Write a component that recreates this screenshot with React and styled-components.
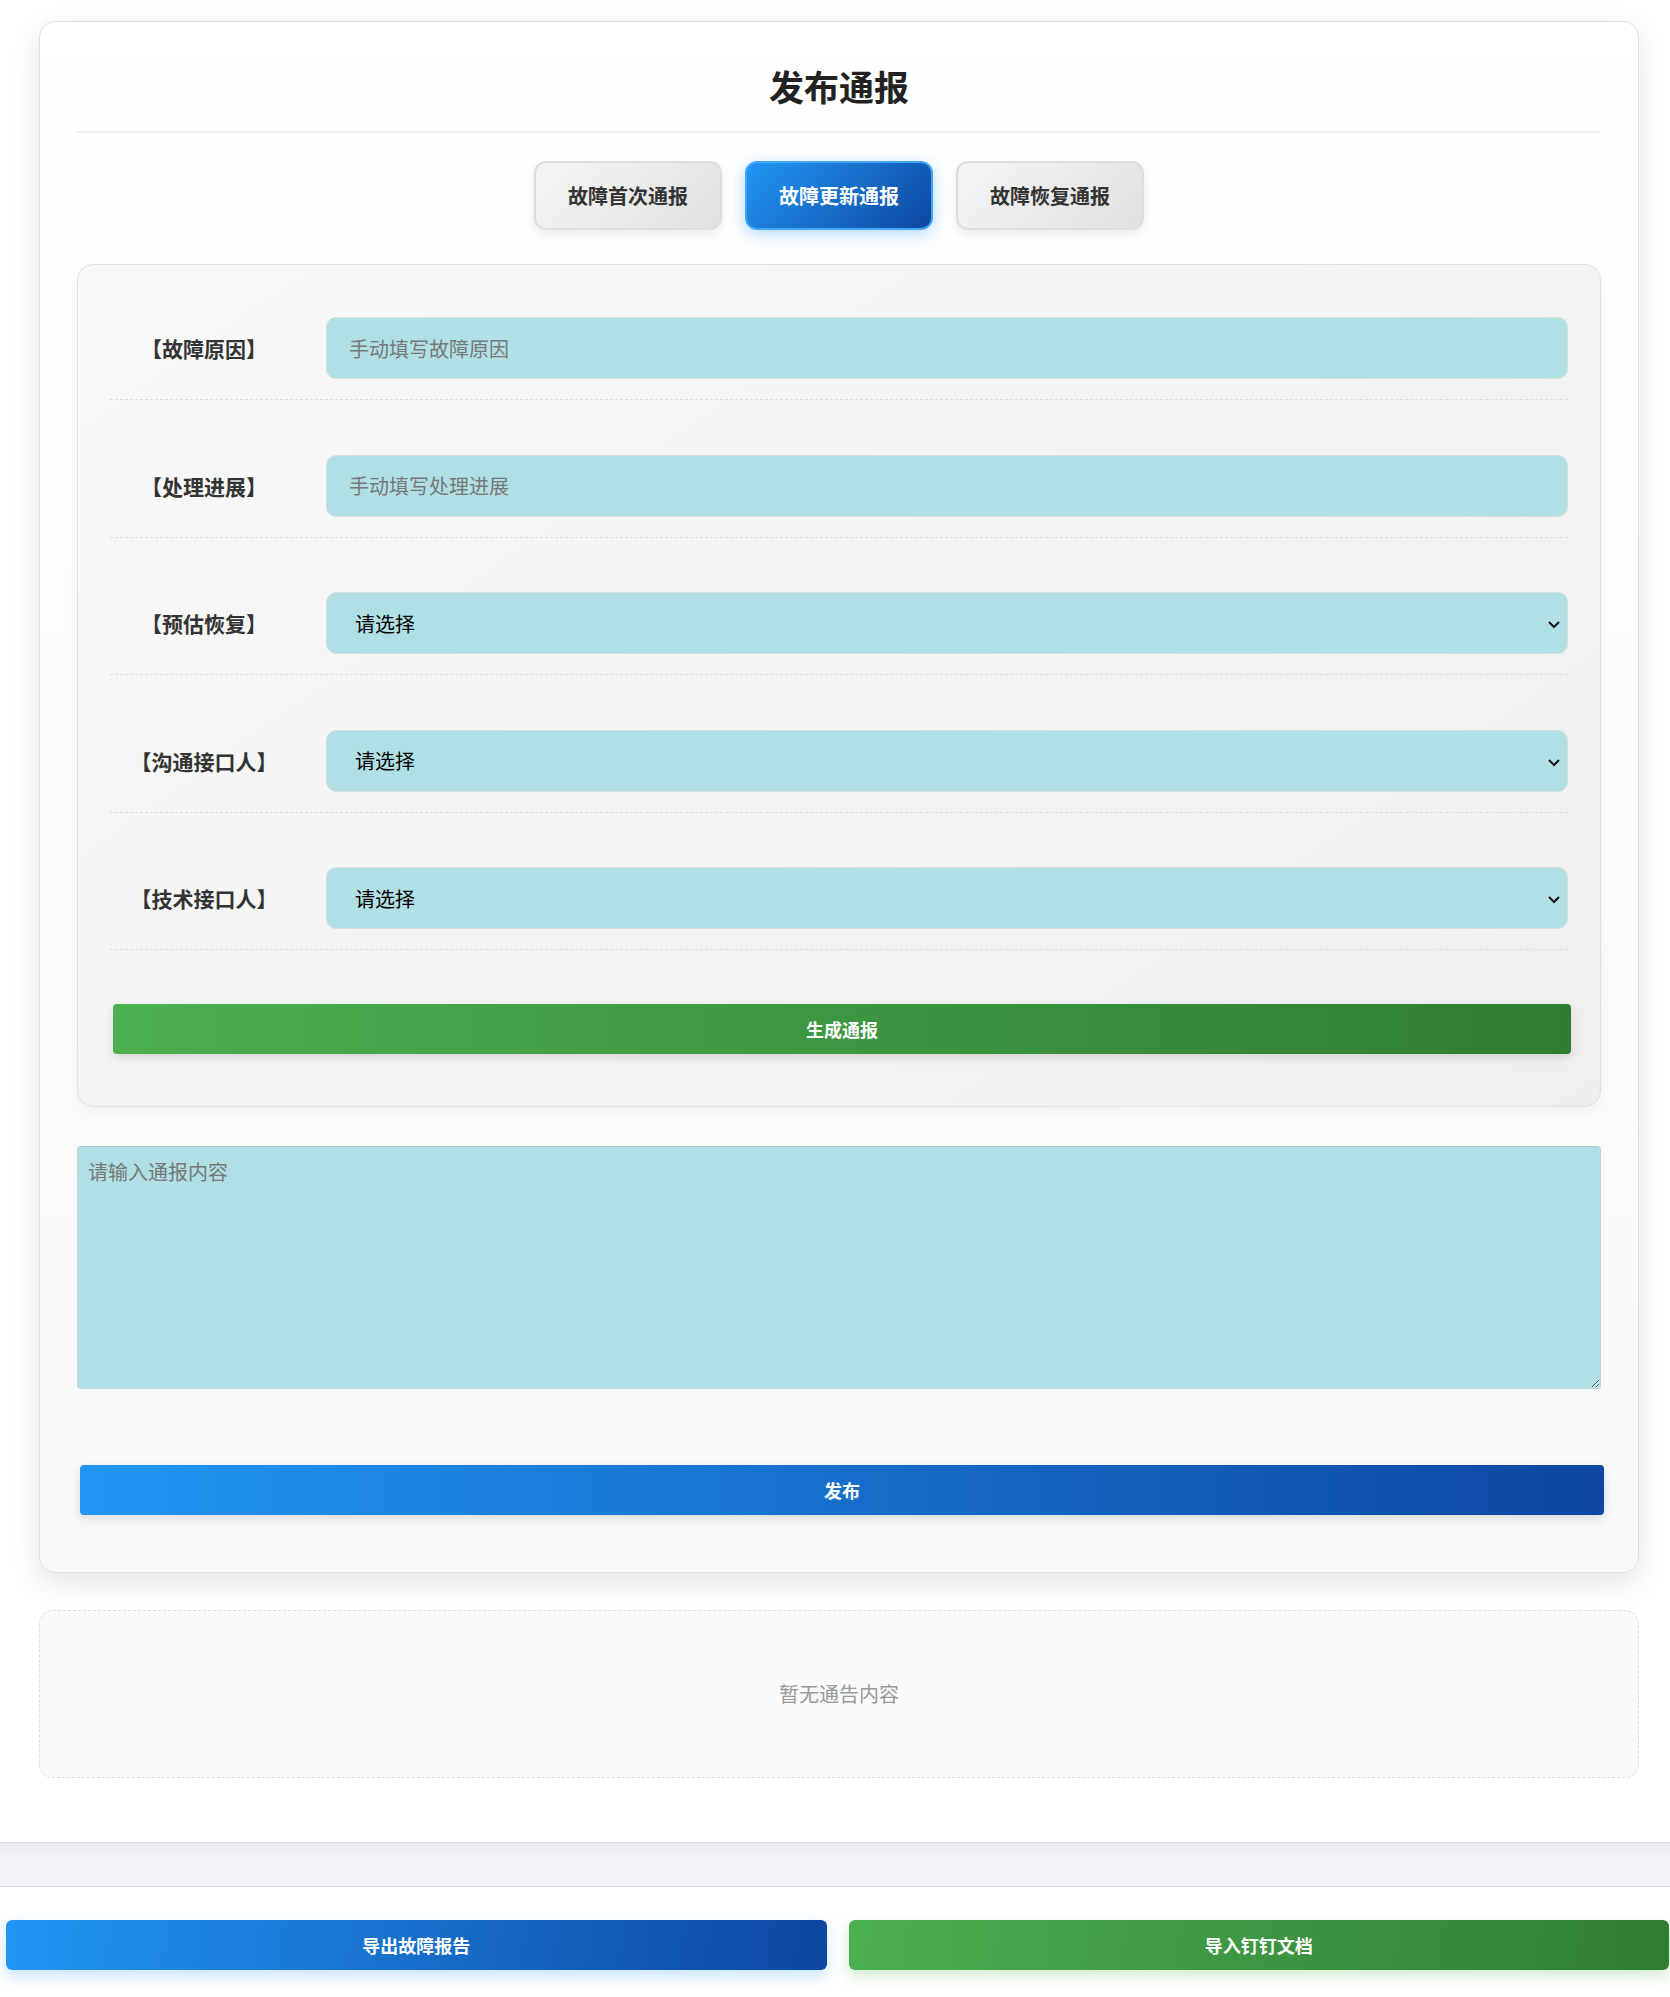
import React, { useState } from 'react';
import styled, { createGlobalStyle } from 'styled-components';

const GlobalStyle = createGlobalStyle`
  * {
    box-sizing: border-box;
  }

  body {
    margin: 0;
    background: #fff;
    font-family: "Noto Sans CJK SC", "Noto Sans", sans-serif;
    color: #333;
  }
`;

const Page = styled.div`
  padding: 21px 0 0 39px;
`;

const Card = styled.div`
  display: flex;
  flex-direction: column;
  width: 1600px;
  padding: 37px;
  background: linear-gradient(180deg, #ffffff 0%, #f8f9fa 100%);
  border: 1px solid #e0e0e0;
  border-radius: 16px;
  box-shadow: 0 10px 30px rgba(0, 0, 0, 0.1);
`;

const Title = styled.h2`
  margin: 6px 0 0;
  padding-bottom: 24px;
  border-bottom: 2px solid #eeeeee;
  text-align: center;
  font-size: 35px;
  line-height: 42px;
  font-weight: 700;
  color: #222;
`;

const Tabs = styled.div`
  display: flex;
  justify-content: center;
  gap: 23px;
  margin-top: 28px;
`;

const Tab = styled.button`
  padding: 20px 32px;
  font-family: inherit;
  font-size: 20px;
  line-height: 25px;
  font-weight: 700;
  border-radius: 12px;
  cursor: pointer;
  color: ${p => (p.$active ? '#fff' : '#333')};
  border: 2px solid ${p => (p.$active ? '#42a5f5' : '#dddddd')};
  background: ${p =>
    p.$active
      ? 'linear-gradient(135deg, #2196f3, #0d47a1)'
      : 'linear-gradient(135deg, #f5f5f5, #e0e0e0)'};
  box-shadow: ${p =>
    p.$active
      ? '0 4px 15px rgba(33, 150, 243, 0.35)'
      : '0 4px 10px rgba(0, 0, 0, 0.08)'};
`;

const Panel = styled.div`
  display: flex;
  flex-direction: column;
  margin-top: 34px;
  padding: 32px;
  background: linear-gradient(145deg, #f9f9f9, #efefef);
  border: 1px solid #e0e0e0;
  border-radius: 16px;
  box-shadow: 0 4px 12px rgba(0, 0, 0, 0.04);
`;

const Row = styled.div`
  display: flex;
  align-items: center;
  gap: 28px;
  padding: 20px 0;
  margin-bottom: 34.5px;
  border-bottom: 1px dashed #dcdcdc;
`;

const Label = styled.label`
  width: 188px;
  flex-shrink: 0;
  text-align: center;
  font-size: 21px;
  font-weight: 700;
  color: #333;
`;

const fieldBase = `
  width: 100%;
  height: 62px;
  border: 1px solid #d6dfe0;
  border-radius: 10px;
  background: #b0e0e6;
  font-family: inherit;
  font-size: 20px;
  color: #000;
  outline: none;
`;

const TextInput = styled.input`
  ${fieldBase}
  flex: 1;
  padding: 0 22px;

  &::placeholder {
    color: #777;
  }
`;

const SelectWrap = styled.div`
  position: relative;
  flex: 1;
  display: flex;
`;

const Select = styled.select`
  ${fieldBase}
  appearance: none;
  padding: 0 40px 0 28px;
`;

const Chevron = styled.svg`
  position: absolute;
  right: 7px;
  top: 50%;
  width: 14px;
  height: 9px;
  margin-top: -3px;
  pointer-events: none;
`;

const ActionButton = styled.button`
  display: block;
  width: 100%;
  height: 50px;
  margin: ${p => p.$margin || '20px 0'};
  margin-left: 3px;
  border: none;
  border-radius: 4px;
  font-family: inherit;
  font-size: 18px;
  font-weight: 700;
  color: #fff;
  cursor: pointer;
  background: ${p =>
    p.$tone === 'green'
      ? 'linear-gradient(90deg, #4caf50, #2e7d32)'
      : 'linear-gradient(90deg, #2196f3, #0d47a1)'};
  box-shadow: 0 4px 10px rgba(0, 0, 0, 0.12);
`;

const Content = styled.textarea`
  display: block;
  width: 100%;
  height: 243px;
  margin-top: 39px;
  padding: 10px;
  background: #b0e0e6;
  border: 1px solid #c6d2d4;
  border-top-color: #a9c9cd;
  border-radius: 4px;
  font-family: inherit;
  font-size: 20px;
  color: #000;
  resize: vertical;
  outline: none;

  &::placeholder {
    color: #777;
  }
`;

const Empty = styled.div`
  width: 1600px;
  height: 168px;
  margin-top: 37px;
  display: flex;
  align-items: center;
  justify-content: center;
  background: #fafafa;
  border: 1px dashed #dddddd;
  border-radius: 14px;
  font-size: 20px;
  color: #999;
`;

const Band = styled.div`
  height: 45px;
  margin-top: 64px;
  border-top: 1px solid #dcdcdc;
  border-bottom: 1px solid #dcdcdc;
  background: linear-gradient(180deg, #ebecef 0%, #f5f6f9 60%, #f2f3f6 100%);
`;

const Footer = styled.div`
  display: flex;
  gap: 22px;
  padding: 33px 1px 28px 6px;
`;

const FooterButton = styled.button`
  flex: 1;
  height: 50px;
  border: none;
  border-radius: 6px;
  font-family: inherit;
  font-size: 18px;
  font-weight: 700;
  color: #fff;
  cursor: pointer;
  background: ${p =>
    p.$tone === 'green'
      ? 'linear-gradient(100deg, #4caf50, #2e7d32)'
      : 'linear-gradient(100deg, #2196f3, #0d47a1)'};
  box-shadow: ${p =>
    p.$tone === 'green'
      ? '0 6px 14px rgba(76, 175, 80, 0.25)'
      : '0 6px 14px rgba(33, 150, 243, 0.25)'};
`;

const tabs = ['故障首次通报', '故障更新通报', '故障恢复通报'];

const fields = [
  { label: '【故障原因】', type: 'input', placeholder: '手动填写故障原因' },
  { label: '【处理进展】', type: 'input', placeholder: '手动填写处理进展' },
  { label: '【预估恢复】', type: 'select' },
  { label: '【沟通接口人】', type: 'select' },
  { label: '【技术接口人】', type: 'select' },
];

export default function App() {
  const [active, setActive] = useState(1);

  return (
    <>
      <GlobalStyle />
      <Page>
        <Card>
          <Title>发布通报</Title>
          <Tabs>
            {tabs.map((t, i) => (
              <Tab key={t} $active={i === active} onClick={() => setActive(i)}>
                {t}
              </Tab>
            ))}
          </Tabs>

          <Panel>
            {fields.map(f => (
              <Row key={f.label}>
                <Label>{f.label}</Label>
                {f.type === 'input' ? (
                  <TextInput placeholder={f.placeholder} />
                ) : (
                  <SelectWrap>
                    <Select defaultValue="">
                      <option value="">请选择</option>
                    </Select>
                    <Chevron viewBox="0 0 14 9">
                      <path d="M2 2 L7 7 L12 2" fill="none" stroke="#111" strokeWidth="2" />
                    </Chevron>
                  </SelectWrap>
                )}
              </Row>
            ))}
            <ActionButton $tone="green" $margin="19px 0 20px">生成通报</ActionButton>
          </Panel>

          <Content placeholder="请输入通报内容" />
          <ActionButton $margin="76px 0 20px">发布</ActionButton>
        </Card>

        <Empty>暂无通告内容</Empty>
      </Page>

      <Band />
      <Footer>
        <FooterButton>导出故障报告</FooterButton>
        <FooterButton $tone="green">导入钉钉文档</FooterButton>
      </Footer>
    </>
  );
}
